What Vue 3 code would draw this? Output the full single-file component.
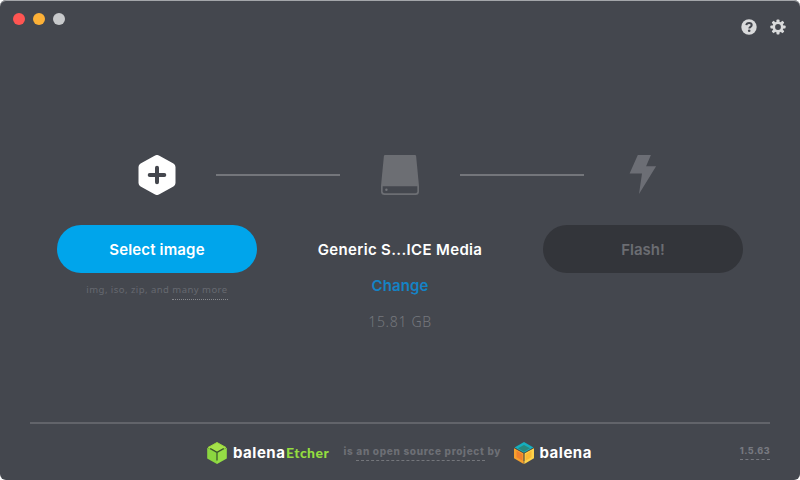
<script setup>
const formats = 'img, iso, zip, and '
</script>

<template>
  <div class="window">
    <header class="titlebar">
      <div class="lights">
        <i class="light close"></i>
        <i class="light minimize"></i>
        <i class="light zoom"></i>
      </div>
      <div class="tools">
        <svg width="16" height="16" viewBox="0 0 16 16">
          <circle cx="8" cy="8" r="7.7" fill="#d9dadb" />
          <path d="M5.300 6.200C5.500 4.700 6.500 4 8.100 4c1.600 0 2.600.8 2.600 2 0 1.900-2.400 1.700-2.400 3.500" fill="none" stroke="#44474e" stroke-width="2" />
          <circle cx="8.2" cy="11.800" r="1.300" fill="#44474e" />
        </svg>
        <svg width="16" height="16" viewBox="0 0 16 16">
          <g fill="#d9dadb">
            <rect v-for="a in [0, 45, 90, 135]" :key="a" x="6.5" y=".4" width="3" height="15.2" rx=".8" :transform="`rotate(${a} 8 8)`" />
            <circle cx="8" cy="8" r="5.5" />
          </g>
          <circle cx="8" cy="8" r="2.900" fill="#44474e" />
        </svg>
      </div>
    </header>

    <main class="steps">
      <section class="step">
        <div class="symbol">
          <svg width="40" height="40" viewBox="0 0 40 40">
            <path d="M20 4 34.500 12v16L20 36 5.500 28V12Z" fill="#fff" stroke="#fff" stroke-width="8" stroke-linejoin="round" />
            <path d="M20 12.7v14.6M12.7 20h14.6" stroke="#44474e" stroke-width="4" stroke-linecap="round" />
          </svg>
        </div>
        <button class="button primary"><span class="select">Select image</span></button>
        <p class="formats">{{ formats }}<span class="more">many more</span></p>
      </section>

      <div class="connector"></div>

      <section class="step">
        <div class="symbol">
          <svg width="40" height="40" viewBox="0 0 40 40">
            <path d="M5 0h30q1 0 1.1 1L39 31v5.500q0 3.500-3.500 3.500h-31Q1 40 1 36.500V31L3.900 1Q4 0 5 0Z" fill="#6c6e73" />
            <path d="M2.700 31.200h34.600v5q0 2-2 2H4.700q-2 0-2-2Z" fill="#44474e" />
            <circle cx="6.400" cy="34.700" r="1.200" fill="#73757a" />
          </svg>
        </div>
        <h2 class="device">Generic S...ICE Media</h2>
        <a class="change">Change</a>
        <p class="size">15.81 GB</p>
      </section>

      <div class="connector"></div>

      <section class="step">
        <div class="symbol">
          <svg width="40" height="40" viewBox="0 0 40 40">
            <path d="M14.800 0h13.100l-4.800 11.200h10L16 39l3-20.500H6.600Z" fill="#6c6e75" />
          </svg>
        </div>
        <button class="button disabled"><span class="flash">Flash!</span></button>
      </section>
    </main>

    <footer class="footer">
      <div class="brand">
        <svg width="20" height="22" viewBox="0 0 20 22">
          <path d="m10 .5 9 5-9 5-9-5Z" fill="#a5e24a" stroke="#9bd83c" />
          <path d="m.2 5.700 9.800 5.300v11L.2 16.500Z" fill="#8bd640" />
          <path d="m19.800 5.700-9.800 5.300v11l9.800-5.500Z" fill="#94dd45" />
          <path d="m3.300 6.500 6.700 3.700 6.700-3.700M10 10.200v8.300" fill="none" stroke="#36502c" stroke-width="1.200" />
        </svg>
        <span class="word">balena</span><span class="etcher">Etcher</span>
      </div>
      <p class="credit">is <span class="project">an open source project</span> by</p>
      <div class="brand company">
        <svg width="20" height="22" viewBox="0 0 20 22">
          <path d="m10 0 9.500 5.400L10 11 .5 5.400Z" fill="#16aebd" />
          <path d="m10 3 6 3.200-6 3.600-6-3.600Z" fill="#29887d" />
          <path d="m0 6 9.700 5.300V22L0 16.300Z" fill="#f6a12d" />
          <path d="m20 6-9.700 5.300V22l9.700-5.700Z" fill="#ffd34b" />
          <path d="m2.500 8.800 6 3.500v6.500l-6-3.500Z" fill="#ef802e" />
          <path d="m17.500 8.800-6 3.500v6.500l6-3.500Z" fill="#f9b934" />
          <path d="m0 5.700 10 5.500 10-5.500M10 11v8" fill="none" stroke="#4b4d45" stroke-width=".8" />
        </svg>
        <span class="word">balena</span>
      </div>
      <span class="version">1.5.63</span>
    </footer>
  </div>
</template>

<style>
body { background: #fff; overflow: hidden; }
</style>

<style scoped>
* { box-sizing: border-box; }
p, h2 { margin: 0; }
svg { display: block; flex: none; }
.window {
  width: 800px; height: 480px; display: flex; flex-direction: column;
  background: #44474e; border-radius: 6px; overflow: hidden;
  box-shadow: inset 0 1px #a4a6aa;
  font-family: Inter, "Liberation Sans", sans-serif; color: #fff;
}
.titlebar { height: 155px; display: flex; justify-content: space-between; padding: 13px 14px 0 13px; }
.lights { display: flex; gap: 8px; }
.light { width: 12px; height: 12px; border-radius: 50%; }
.close { background: #ff5552; }
.minimize { background: #fdb137; }
.zoom { background: #c8cacc; }
.tools { display: flex; gap: 13px; padding-top: 6px; }
.steps { height: 267px; display: flex; justify-content: center; }
.step { width: 200px; flex: none; display: flex; flex-direction: column; align-items: center; }
.connector { width: 124px; height: 2px; margin: 19px -40px 0 -41px; flex: none; background: #74767b; }
.connector + .step + .connector { margin: 19px -41px 0 -40px; }
.symbol { height: 70px; }
.button {
  width: 200px; height: 48px; border: 0; border-radius: 24px; padding: 1px 0 0;
  font: 600 15px/48px Inter, sans-serif; white-space: nowrap;
}
.primary { background: #00a5eb; color: #fff; }
.disabled { background: #33353a; color: #6b6d72; }
.select { letter-spacing: .15px; }
.formats { margin-top: 10px; font: 400 9.500px/13px "Noto Sans", sans-serif; letter-spacing: .46px; color: #666970; white-space: pre; }
.more { display: inline-block; height: 17px; border-bottom: 1px dotted #85878c; }
.device { padding-top: 1px; font: 600 15px/48px Inter, sans-serif; letter-spacing: .34px; white-space: nowrap; }
.change { font: 600 15px/24px Inter, sans-serif; letter-spacing: .1px; color: #1483c6; }
.size { margin-top: 12px; font: 300 14px/24px "Noto Sans", sans-serif; letter-spacing: .7px; color: #75777d; }
.footer { height: 58px; margin: 0 30px; border-top: 2px solid #62646a; display: flex; align-items: flex-start; }
.brand { width: 123px; flex: none; display: flex; align-items: center; margin: 18px 0 0 177px; height: 22px; }
.word { margin-left: 6px; width: 53px; font-size: 15px; font-weight: 700; line-height: 20px; letter-spacing: .5px; }
.etcher { margin-left: 0; font: 900 14px/20px Lato, sans-serif; letter-spacing: .45px; color: #94dc40; }
.credit { width: 157px; flex: none; margin: 18px 0 0 13.500px; font: 800 10px/18px Inter, sans-serif; letter-spacing: .69px; color: #6d6f75; white-space: nowrap; }
.project { display: inline-block; height: 19px; border-bottom: 1px dashed #74767b; }
.company { width: 79px; margin-left: 13px; }
.version { margin: 17px 0 0 auto; height: 19px; font: 800 9px/19px Inter, sans-serif; letter-spacing: .45px; color: #777980; border-bottom: 1px dashed #777980; }
</style>
